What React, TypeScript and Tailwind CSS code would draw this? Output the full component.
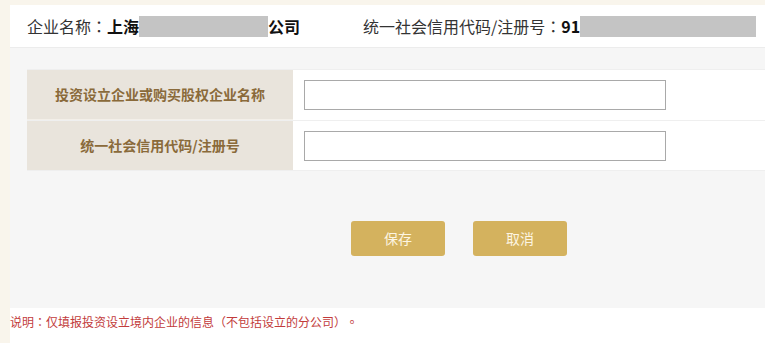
import React from "react";

const font = { fontFamily: '"Microsoft YaHei", "Noto Sans CJK SC", "Noto Sans", sans-serif' };
const tc = { fontFamily: '"Noto Sans CJK TC", sans-serif' };

export default function App() {
  return (
    <div className="flex w-[765px] h-[343px] bg-[#f9f5ec] pl-[10px] pt-[5px] overflow-hidden [text-spacing-trim:space-all]" style={font}>
      <div className="flex flex-1 flex-col">
        <div className="h-[43px] bg-white flex items-center pl-[17px] text-[16px] text-[#333] border-b border-[#ececec]">
          <div className="flex items-center w-[336px]">
            <span>企业名称<span style={tc}>：</span></span>
            <span className="font-bold text-[#111]">上海</span>
            <span className="inline-block w-[129px] h-[21px] bg-[#c4c4c4]" />
            <span className="font-bold text-[#111]">公司</span>
          </div>
          <div className="flex items-center">
            <span>统一社会信用代码/注册号<span style={tc}>：</span></span>
            <span className="font-bold text-[#111]">91</span>
            <span className="inline-block w-[176px] h-[21px] bg-[#c4c4c4]" />
          </div>
        </div>
        <div className="bg-[#f6f6f6] pt-[21px] pb-[52px]">
          <div className="ml-[17px] border-t border-[#efefef]">
            <div className="flex h-[51px] border-b border-[#efefef]">
              <div className="w-[266px] bg-[#e9e4dc] flex items-center justify-center text-[14px] font-bold text-[#8a6a3a] border-b border-[#f3efe9]">
                投资设立企业或购买股权企业名称
              </div>
              <div className="flex-1 bg-white flex items-center pl-[11px]">
                <input className="w-[362px] h-[30px] border border-[#a9a9a9] bg-white outline-none" />
              </div>
            </div>
            <div className="flex h-[50px] border-b border-[#efefef]">
              <div className="w-[266px] bg-[#e9e4dc] flex items-center justify-center text-[14px] font-bold text-[#8a6a3a]">
                统一社会信用代码/注册号
              </div>
              <div className="flex-1 bg-white flex items-center pl-[11px]">
                <input className="w-[362px] h-[30px] border border-[#a9a9a9] bg-white outline-none" />
              </div>
            </div>
          </div>
          <div className="flex gap-[28px] ml-[341px] mt-[50px]">
            <button className="w-[94px] h-[35px] rounded-[3px] bg-[#d4b25e] text-[#fdf5e2] text-[14px]">保存</button>
            <button className="w-[94px] h-[35px] rounded-[3px] bg-[#d4b25e] text-[#fdf5e2] text-[14px]">取消</button>
          </div>
        </div>
        <div className="flex-1 bg-white pt-[5px] text-[12px] text-[#c23b3b]">
          说明<span style={tc}>：</span>仅填报投资设立境内企业的信息<span style={tc}>（</span>不包括设立的分公司<span style={tc}>）。</span>
        </div>
      </div>
    </div>
  );
}
